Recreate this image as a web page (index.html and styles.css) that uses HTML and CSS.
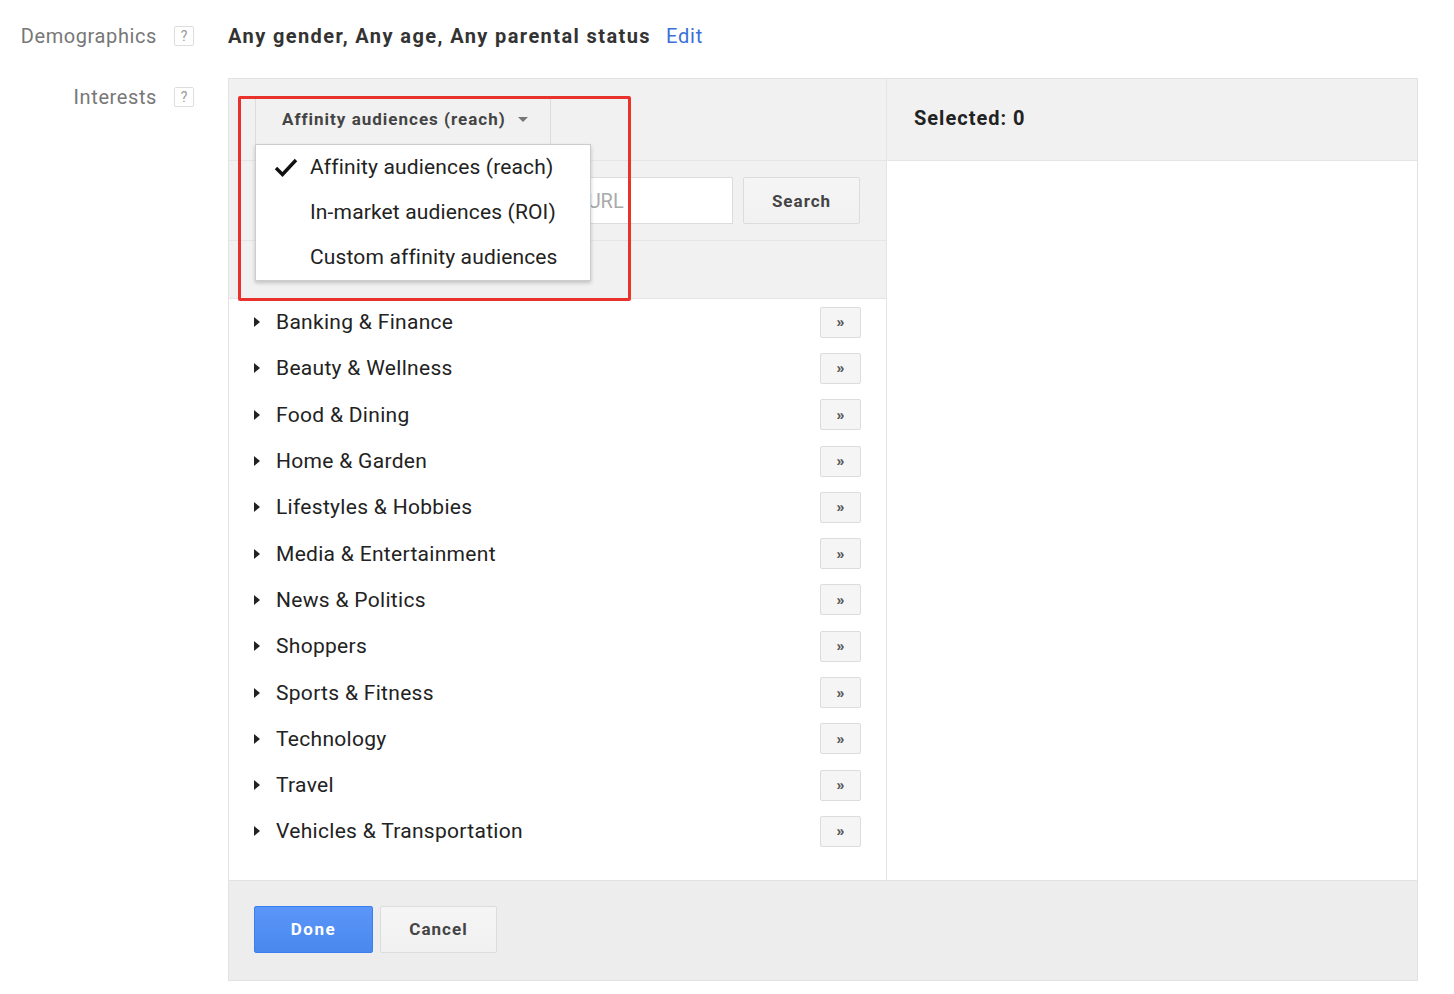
FILE: index.html
```html
<!DOCTYPE html>
<html>
  <head>
    <title>Interests</title>
    <link rel="stylesheet" href="styles.css">
  </head>
  <body>
    <div class="targeting">
      <div class="field-row demo-row">
        <div class="field-label">
          <span>Demographics</span>
          <span class="help">?</span>
        </div>
        <div class="field-value">
          <span class="summary">Any gender, Any age, Any parental status</span>
          <a class="edit-link" href="#">Edit</a>
        </div>
      </div>

      <div class="field-row">
        <div class="field-label interests-label">
          <span>Interests</span>
          <span class="help">?</span>
        </div>
        <div class="panel">
          <div class="panel-body">
            <div class="picker">
              <div class="picker-head">
                <div class="type-select">
                  <button type="button" class="type-button">
                    Affinity audiences (reach)
                    <span class="caret"></span>
                  </button>
                  <ul class="type-menu">
                    <li class="checked">
                      <svg class="check" width="24" height="20" viewBox="0 0 24 20">
                        <path d="M2 10 L8.5 16.5 L22 2" fill="none" stroke="#111" stroke-width="3.4"/>
                      </svg>
                      Affinity audiences (reach)
                    </li>
                    <li>In-market audiences (ROI)</li>
                    <li>Custom affinity audiences</li>
                  </ul>
                </div>
              </div>
              <div class="search-row">
                <input type="text" class="search-input" placeholder="Search by word, phrase, or URL">
                <button type="button" class="btn">Search</button>
              </div>
              <div class="browse-row"></div>
              <ul class="category-list">
                <li><span class="tri"></span><span class="cat-name">Banking &amp; Finance</span><button type="button" class="add-btn">&raquo;</button></li>
                <li><span class="tri"></span><span class="cat-name">Beauty &amp; Wellness</span><button type="button" class="add-btn">&raquo;</button></li>
                <li><span class="tri"></span><span class="cat-name">Food &amp; Dining</span><button type="button" class="add-btn">&raquo;</button></li>
                <li><span class="tri"></span><span class="cat-name">Home &amp; Garden</span><button type="button" class="add-btn">&raquo;</button></li>
                <li><span class="tri"></span><span class="cat-name">Lifestyles &amp; Hobbies</span><button type="button" class="add-btn">&raquo;</button></li>
                <li><span class="tri"></span><span class="cat-name">Media &amp; Entertainment</span><button type="button" class="add-btn">&raquo;</button></li>
                <li><span class="tri"></span><span class="cat-name">News &amp; Politics</span><button type="button" class="add-btn">&raquo;</button></li>
                <li><span class="tri"></span><span class="cat-name">Shoppers</span><button type="button" class="add-btn">&raquo;</button></li>
                <li><span class="tri"></span><span class="cat-name">Sports &amp; Fitness</span><button type="button" class="add-btn">&raquo;</button></li>
                <li><span class="tri"></span><span class="cat-name">Technology</span><button type="button" class="add-btn">&raquo;</button></li>
                <li><span class="tri"></span><span class="cat-name">Travel</span><button type="button" class="add-btn">&raquo;</button></li>
                <li><span class="tri"></span><span class="cat-name">Vehicles &amp; Transportation</span><button type="button" class="add-btn">&raquo;</button></li>
              </ul>
              <div class="highlight"></div>
            </div>
            <div class="selected">
              <div class="selected-head">Selected: 0</div>
            </div>
          </div>
          <div class="panel-foot">
            <button type="button" class="btn btn-primary">Done</button>
            <button type="button" class="btn">Cancel</button>
          </div>
        </div>
      </div>
    </div>
  </body>
</html>
```

FILE: styles.css
```css
* {
  box-sizing: border-box;
}

body {
  margin: 0;
  padding: 0;
  font-family: Roboto, "Liberation Sans", Arial, sans-serif;
  background-color: #fff;
  color: #222;
}

.targeting {
  padding-top: 24px;
}

.field-row {
  display: grid;
  grid-template-columns: 194px 1190px;
  column-gap: 34px;
}

.demo-row {
  margin-bottom: 30px;
}

.field-label {
  display: flex;
  justify-content: flex-end;
  align-items: center;
  gap: 17px;
  height: 24px;
  font-size: 20px;
  letter-spacing: 0.6px;
  color: #777;
}

.interests-label {
  margin-top: 7px;
}

.help {
  display: inline-flex;
  align-items: center;
  justify-content: center;
  width: 20px;
  height: 20px;
  border: 1px solid #ddd;
  border-radius: 2px;
  font-size: 14px;
  letter-spacing: 0;
  color: #999;
}

.field-value {
  display: flex;
  align-items: center;
  height: 24px;
  font-size: 20px;
}

.summary {
  font-weight: bold;
  letter-spacing: 1.4px;
  color: #333;
}

.edit-link {
  margin-left: 15px;
  letter-spacing: 0.8px;
  color: #3b6fd8;
  text-decoration: none;
}

/* panel */

.panel {
  border: 1px solid #e2e2e2;
}

.panel-body {
  display: grid;
  grid-template-columns: 658px 1fr;
}

.picker {
  position: relative;
  border-right: 1px solid #e5e5e5;
}

.picker-head {
  height: 82px;
  padding: 18px 0 0 26px;
  background-color: #f1f1f1;
  border-bottom: 1px solid #e5e5e5;
}

.type-select {
  position: relative;
  display: inline-block;
}

.type-button {
  display: flex;
  align-items: center;
  width: 296px;
  height: 47px;
  padding: 0 0 3px 26px;
  border: none;
  border-left: 1px solid #dcdcdc;
  border-right: 1px solid #dcdcdc;
  background-color: #f1f1f1;
  font-family: inherit;
  font-size: 17px;
  font-weight: bold;
  letter-spacing: 1px;
  color: #444;
  cursor: pointer;
}

.caret {
  margin-left: 12px;
  border-left: 5px solid transparent;
  border-right: 5px solid transparent;
  border-top: 5px solid #777;
}

.type-menu {
  position: absolute;
  top: 47px;
  left: 0;
  z-index: 2;
  width: 336px;
  margin: 0;
  padding: 0;
  list-style: none;
  background-color: #fff;
  border: 1px solid #ccc;
  box-shadow: 0 2px 4px rgba(0, 0, 0, 0.2);
}

.type-menu li {
  position: relative;
  height: 45px;
  line-height: 45px;
  padding-left: 54px;
  font-size: 21px;
  letter-spacing: 0.15px;
  color: #222;
}

.check {
  position: absolute;
  left: 18px;
  top: 13px;
}

.search-row {
  display: flex;
  gap: 10px;
  height: 80px;
  padding: 16px 0 0 26px;
  background-color: #f1f1f1;
  border-bottom: 1px solid #e5e5e5;
}

.search-input {
  width: 478px;
  height: 47px;
  padding: 0 10px 0 94px;
  border: 1px solid #dcdcdc;
  font-family: inherit;
  font-size: 20px;
}

.search-input::placeholder {
  color: #aaa;
}

.btn {
  height: 47px;
  padding: 0 20px;
  min-width: 117px;
  border: 1px solid #dcdcdc;
  border-radius: 2px;
  background: linear-gradient(#f5f5f5, #f1f1f1);
  font-family: inherit;
  font-size: 17px;
  font-weight: bold;
  letter-spacing: 1px;
  color: #444;
  cursor: pointer;
}

.btn-primary {
  min-width: 119px;
  border-color: #3a7ff0;
  background: linear-gradient(#5b96f9, #4a88ee);
  letter-spacing: 1.5px;
  color: #fff;
}

.browse-row {
  height: 58px;
  background-color: #f1f1f1;
  border-bottom: 1px solid #e5e5e5;
}

.category-list {
  margin: 0;
  padding: 0 0 25px 0;
  list-style: none;
}

.category-list li {
  display: flex;
  align-items: center;
  height: 46.3px;
  padding: 0 25px 0 25px;
  font-size: 21px;
  letter-spacing: 0.3px;
  color: #222;
}

.tri {
  width: 0;
  height: 0;
  border-top: 5px solid transparent;
  border-bottom: 5px solid transparent;
  border-left: 6px solid #222;
  margin-right: 16px;
}

.cat-name {
  flex: 1;
}

.add-btn {
  width: 41px;
  height: 31px;
  padding: 0;
  border: 1px solid #dcdcdc;
  border-radius: 2px;
  background-color: #f5f5f5;
  font-size: 14px;
  font-weight: bold;
  color: #555;
}

.highlight {
  position: absolute;
  left: 9px;
  top: 17px;
  width: 393px;
  height: 205px;
  border: 3px solid #e8322b;
  border-radius: 2px;
  z-index: 3;
  pointer-events: none;
}

.selected-head {
  height: 82px;
  padding: 0 0 4px 27px;
  display: flex;
  align-items: center;
  background-color: #f1f1f1;
  border-bottom: 1px solid #e5e5e5;
  font-size: 20px;
  font-weight: bold;
  letter-spacing: 1px;
  color: #222;
}

.panel-foot {
  display: flex;
  gap: 7px;
  height: 100px;
  padding: 25px 0 0 25px;
  background-color: #ededed;
  border-top: 1px solid #e2e2e2;
}
```
